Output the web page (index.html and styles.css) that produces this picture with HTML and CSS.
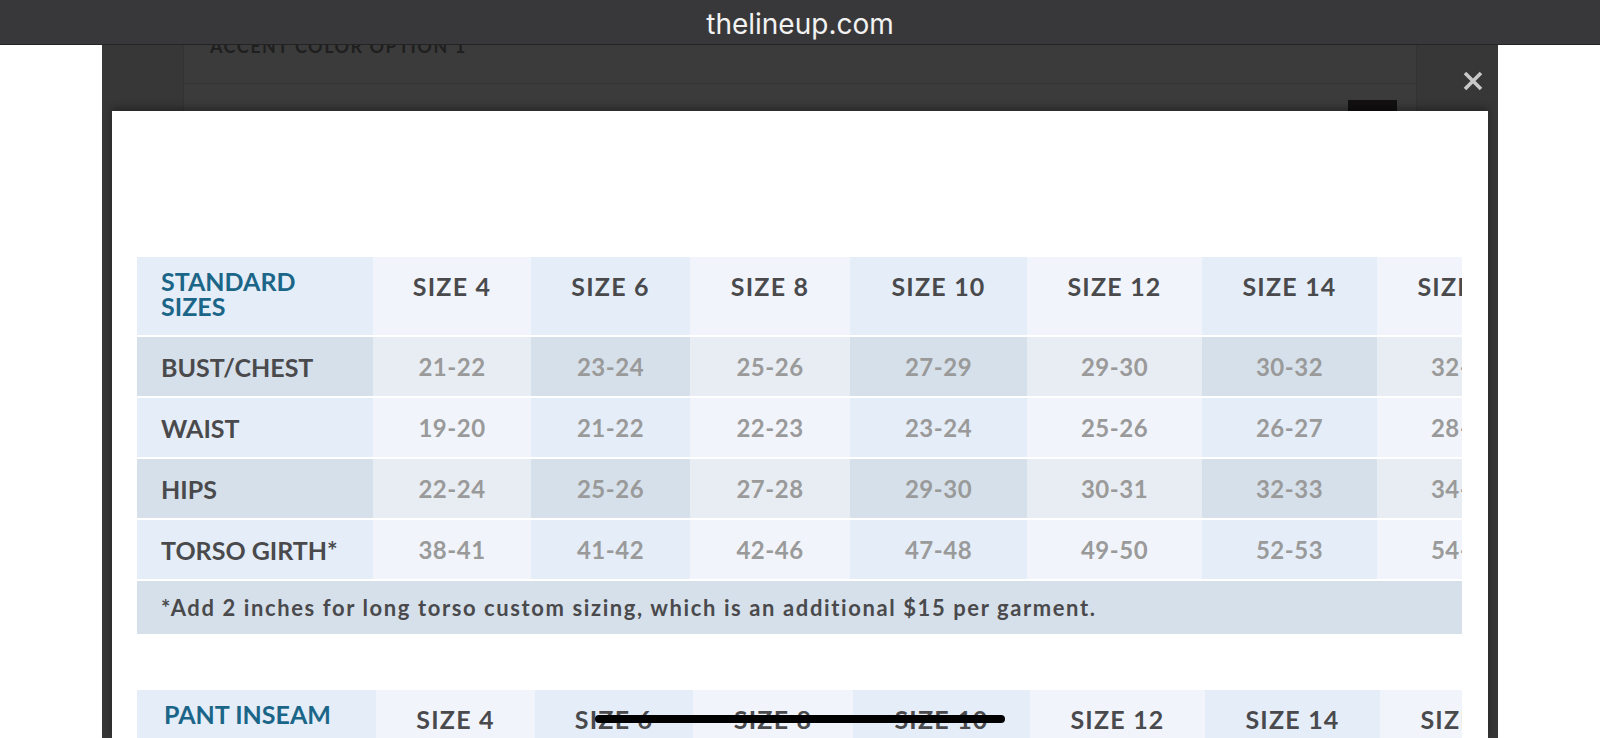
FILE: index.html
```html
<!DOCTYPE html>
<html lang="en">
<head>
    <meta charset="utf-8">
    <title>Size Chart - thelineup.com</title>
    <link rel="stylesheet" href="styles.css">
</head>
<body>
<div class="urlbar">thelineup.com</div>

<div class="backdrop">
    <div class="panel">
        <div class="panel-title">ACCENT COLOR OPTION 1</div>
        <div class="panel-row">
            <span class="swatch"></span>
        </div>
    </div>

    <button class="close" type="button" aria-label="Close">
        <svg width="20" height="20" viewBox="0 0 20 20">
            <path d="M2 2 L18 18 M18 2 L2 18" stroke="#c8c8c8" stroke-width="3.6" stroke-linecap="butt"/>
        </svg>
    </button>

    <div class="modal">
        <!-- standard sizes -->
        <div class="chart">
            <div class="row head">
                <div class="cell label title">STANDARD<br>SIZES</div>
                <div class="cell">SIZE 4</div>
                <div class="cell">SIZE 6</div>
                <div class="cell">SIZE 8</div>
                <div class="cell">SIZE 10</div>
                <div class="cell">SIZE 12</div>
                <div class="cell">SIZE 14</div>
                <div class="cell">SIZE 16</div>
            </div>
            <div class="row dark">
                <div class="cell label">BUST/CHEST</div>
                <div class="cell val">21-22</div>
                <div class="cell val">23-24</div>
                <div class="cell val">25-26</div>
                <div class="cell val">27-29</div>
                <div class="cell val">29-30</div>
                <div class="cell val">30-32</div>
                <div class="cell val">32-34</div>
            </div>
            <div class="row">
                <div class="cell label">WAIST</div>
                <div class="cell val">19-20</div>
                <div class="cell val">21-22</div>
                <div class="cell val">22-23</div>
                <div class="cell val">23-24</div>
                <div class="cell val">25-26</div>
                <div class="cell val">26-27</div>
                <div class="cell val">28-29</div>
            </div>
            <div class="row dark">
                <div class="cell label">HIPS</div>
                <div class="cell val">22-24</div>
                <div class="cell val">25-26</div>
                <div class="cell val">27-28</div>
                <div class="cell val">29-30</div>
                <div class="cell val">30-31</div>
                <div class="cell val">32-33</div>
                <div class="cell val">34-35</div>
            </div>
            <div class="row">
                <div class="cell label">TORSO GIRTH*</div>
                <div class="cell val">38-41</div>
                <div class="cell val">41-42</div>
                <div class="cell val">42-46</div>
                <div class="cell val">47-48</div>
                <div class="cell val">49-50</div>
                <div class="cell val">52-53</div>
                <div class="cell val">54-55</div>
            </div>
            <p class="note">*Add 2 inches for long torso custom sizing, which is an additional $15 per garment.</p>
        </div>

        <!-- pants -->
        <div class="chart pants">
            <div class="row head">
                <div class="cell label title">PANT INSEAM</div>
                <div class="cell">SIZE 4</div>
                <div class="cell">SIZE 6</div>
                <div class="cell">SIZE 8</div>
                <div class="cell">SIZE 10</div>
                <div class="cell">SIZE 12</div>
                <div class="cell">SIZE 14</div>
                <div class="cell">SIZE 16</div>
            </div>
        </div>
    </div>
</div>

<div class="home-indicator"></div>
</body>
</html>
```

FILE: styles.css
```css
html, body {
    margin: 0;
    padding: 0;
}

body {
    background-color: #fff;
    height: 738px;
    overflow: hidden;
}

.urlbar {
    position: relative;
    z-index: 3;
    height: 44px;
    line-height: 48px;
    background-color: #38383a;
    border-bottom: 1px solid #232323;
    color: #f2f2f2;
    font-family: Inter, "Liberation Sans", sans-serif;
    font-size: 28px;
    text-align: center;
}

.backdrop {
    position: relative;
    margin: 0 102px;
    height: 693px;
    background-color: #373737;
    overflow: hidden;
}

.panel {
    margin-left: 81px;
    width: 1232px;
    height: 100%;
    background-color: #3b3b3b;
    border-left: 1px solid #333;
    border-right: 1px solid #333;
}

.panel-title {
    margin-top: -10px;
    height: 48px;
    line-height: 22px;
    padding: 0 0 0 26px;
    border-bottom: 1px solid #333;
    font-family: Lato, "Liberation Sans", sans-serif;
    font-weight: 700;
    font-size: 18px;
    letter-spacing: 1.5px;
    color: #1f1f1f;
}

.panel-row {
    display: flex;
    justify-content: flex-end;
    padding: 16px 19px 0 0;
}

.swatch {
    display: block;
    width: 49px;
    height: 30px;
    background-color: #121010;
}

.close {
    position: absolute;
    top: 26px;
    right: 15px;
    width: 20px;
    height: 20px;
    padding: 0;
    border: 0;
    background: none;
}

.close svg {
    display: block;
}

.modal {
    position: absolute;
    top: 66px;
    left: 10px;
    right: 10px;
    bottom: 0;
    background-color: #fff;
    padding: 146px 26px 0 25px;
    box-shadow: 0 -3px 8px rgba(0, 0, 0, 0.35);
}

.chart {
    width: 1325px;
    overflow: hidden;
    font-family: Lato, "Liberation Sans", sans-serif;
    font-weight: 700;
}

.row {
    display: grid;
    grid-template-columns: 236px 158px 159px 160px 177px 175px 175px 175px;
    height: 59px;
    margin-bottom: 2px;
}

.cell {
    display: flex;
    align-items: center;
    justify-content: center;
    white-space: nowrap;
    font-size: 25px;
    letter-spacing: 1.2px;
    color: #4a4a4d;
}

.cell:nth-child(odd) {
    background-color: #e5eef8;
}

.cell:nth-child(even) {
    background-color: #f1f5fb;
}

.row.dark .cell:nth-child(odd) {
    background-color: #d6e0ea;
}

.row.dark .cell:nth-child(even) {
    background-color: #e8edf3;
}

.cell.label {
    justify-content: flex-start;
    padding-left: 24px;
    letter-spacing: 0;
}

.cell.val {
    font-size: 24px;
    letter-spacing: 0.5px;
    color: #9a9a9a;
}

.row.head {
    height: 78px;
}

.row.head .cell {
    align-items: flex-start;
    padding-top: 17px;
    line-height: 24px;
}

.row.head .cell.title {
    padding-top: 12px;
    line-height: 25px;
    color: #1b6688;
}

.note {
    margin: 0;
    height: 53px;
    line-height: 53px;
    padding-left: 24px;
    background-color: #d6e0ea;
    font-size: 22px;
    letter-spacing: 1.6px;
    color: #4a4a4d;
}

.chart.pants {
    margin-top: 56px;
}

.chart.pants .row {
    grid-template-columns: 239px 159px 158px 160px 177px 175px 175px 175px;
}

.chart.pants .cell.label {
    padding-left: 27px;
}

.home-indicator {
    position: absolute;
    left: 595px;
    top: 715px;
    width: 410px;
    height: 8px;
    border-radius: 4px;
    background-color: #000;
}
```
